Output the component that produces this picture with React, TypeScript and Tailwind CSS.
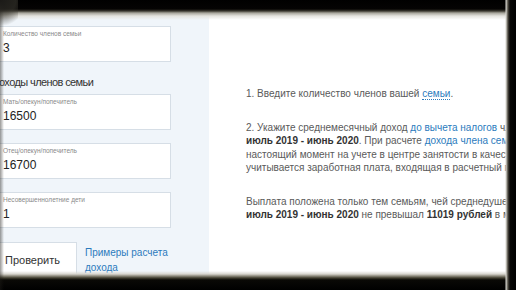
import React from "react";

const font = { fontFamily: '"Liberation Sans", Arial, sans-serif' };

function Field({ label, value }: { label: string; value: string }) {
  return (
    <div className="h-[36px] w-[174px] border border-[#d6dee6] bg-white pl-[5px] pt-[3px]">
      <div className="text-[6.5px] leading-[8px] text-[#8a8a8a]">{label}</div>
      <div className="mt-[3px] text-[12px] leading-[14px] text-[#222]">{value}</div>
    </div>
  );
}

function Frame() {
  return (
    <div className="pointer-events-none absolute inset-0">
      {/* top torn edge */}
      <div className="absolute left-0 right-0 top-0 h-[20px] bg-[linear-gradient(to_bottom,#000_0px,#050403_9px,#3b382f_11px,#a8a69c_13px,#e4e3de_16px,rgba(255,255,255,0)_20px)]" />
      {/* bottom torn edge */}
      <div className="absolute bottom-0 left-0 right-0 h-[19px] bg-[linear-gradient(to_top,#000_0px,#0a0906_10px,#3f3c2e_12px,#8d8a7c_14px,#d8d6cf_16px,rgba(255,255,255,0)_19px)]" />
      {/* right edge */}
      <div className="absolute bottom-0 right-0 top-0 w-[11px] bg-[linear-gradient(to_left,#000_0px,#080706_6px,#4a473e_8px,#d9d7d0_10px,rgba(255,255,255,0)_11px)]" />
      {/* left vignette */}
      <div className="absolute bottom-0 left-0 top-0 w-[4px] bg-[linear-gradient(to_right,rgba(30,28,24,0.45),rgba(255,255,255,0))]" />
      <div className="absolute left-0 top-0 h-[30px] w-[18px] bg-[radial-gradient(circle_at_top_left,#1b1a17_0%,rgba(60,58,50,0.6)_45%,rgba(255,255,255,0)_75%)]" />
    </div>
  );
}

export default function App() {
  return (
    <div className="relative h-[290px] w-[516px] overflow-hidden bg-white" style={font}>
      <div className="flex h-full">
        {/* left form panel */}
        <div className="w-[209px] shrink-0 bg-[#f0f5fa] pt-[26px]">
          <div className="-ml-[3px] flex flex-col">
            <Field label="Количество членов семьи" value="3" />
            <div className="-ml-[5px] mt-[13px] text-[11px] leading-[14px] tracking-[-0.6px] text-[#333]">
              Доходы членов семьи
            </div>
            <div className="mt-[5px] flex flex-col gap-[13px]">
              <Field label="Мать/опекун/попечитель" value="16500" />
              <Field label="Отец/опекун/попечитель" value="16700" />
              <Field label="Несовершеннолетние дети" value="1" />
            </div>
            <div className="mt-[14px] flex items-start gap-[8px]">
              <div className="-ml-[6px] h-[42px] w-[86px] border border-[#d6dee6] bg-white pl-[13px] pt-[10px] text-[11px] leading-[14px] text-[#333]">
                Проверить
              </div>
              <a className="mt-[3px] text-[10px] leading-[15px] text-[#2c7bbd]">
                Примеры расчета
                <br />
                дохода
              </a>
            </div>
          </div>
        </div>

        {/* right instructions panel */}
        <div className="min-w-0 flex-1 overflow-hidden whitespace-nowrap pl-[37px] pt-[87px] text-[10px] leading-[13.5px] text-[#5a5a5a]">
          <p>
            1. Введите количество членов вашей{" "}
            <span className="border-b border-dotted border-[#2c7bbd] text-[#2c7bbd]">семьи</span>.
          </p>
          <p className="mt-[20px]">
            2. Укажите среднемесячный доход{" "}
            <span className="text-[#2c7bbd]">до вычета налогов</span> членов семьи за период
          </p>
          <p>
            <b className="text-[#333]">июль 2019 - июнь 2020</b>. При расчете{" "}
            <span className="text-[#2c7bbd]">дохода члена семьи</span>, который
          </p>
          <p>настоящий момент на учете в центре занятости в качестве безработного,</p>
          <p>учитывается заработная плата, входящая в расчетный период.</p>
          <p className="mt-[20px]">Выплата положена только тем семьям, чей среднедушевой доход за</p>
          <p>
            <b className="text-[#333]">июль 2019 - июнь 2020</b> не превышал{" "}
            <b className="text-[#333]">11019 рублей</b> в месяц.
          </p>
        </div>
      </div>
      <Frame />
    </div>
  );
}
